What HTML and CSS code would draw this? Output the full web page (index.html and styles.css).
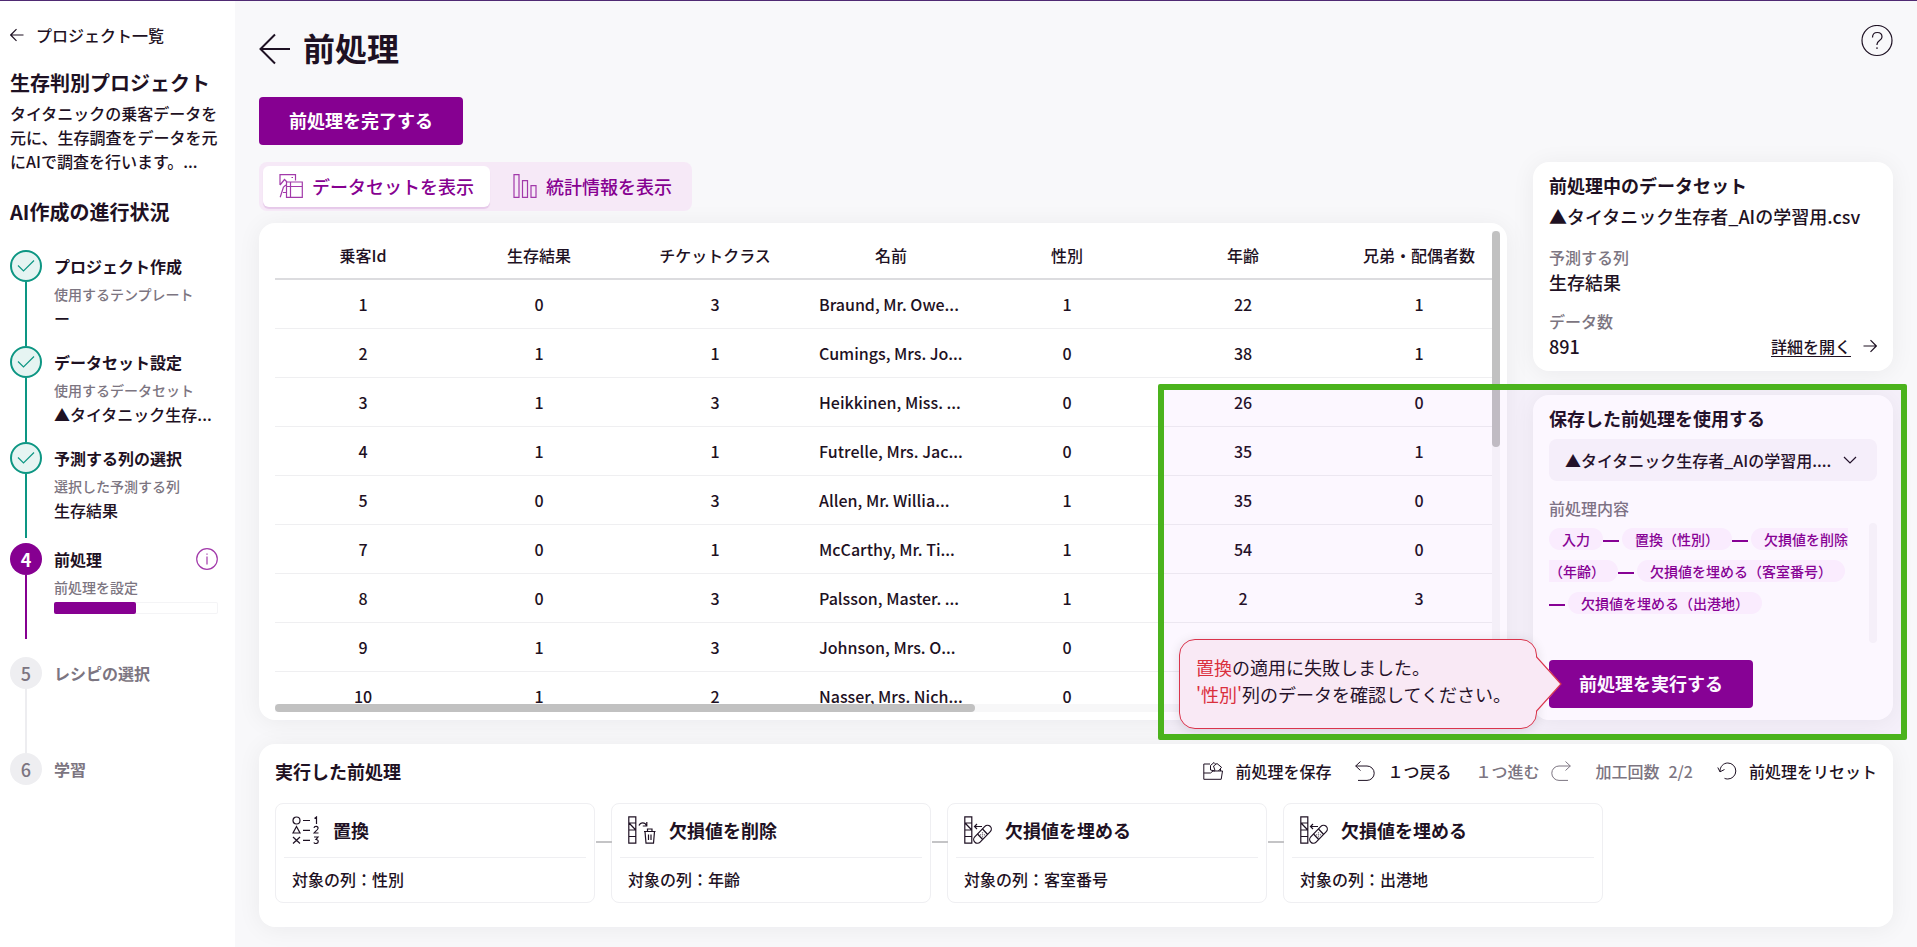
FILE: index.html
```html
<!DOCTYPE html>
<html lang="ja">
<head>
    <meta charset="UTF-8">
    <meta name="viewport" content="width=device-width, initial-scale=1">
    <title>前処理</title>
    <link rel="stylesheet" href="styles.css">
</head>
<body>
    <div class="app">
        <aside class="sidebar">
            <a class="back" href="#">
                <svg width="14" height="14" viewBox="0 0 14 14"><path d="M13.500 7H.8M6.500 1.200L.7 7l5.800 5.800"/></svg>
                プロジェクト一覧
            </a>
            <h2 class="side-title">生存判別プロジェクト</h2>
            <p class="side-desc">タイタニックの乗客データを元に、生存調査をデータを元にAIで調査を行います。...</p>
            <h2 class="side-title progress-title">AI作成の進行状況</h2>
            <ol class="steps">
                <li class="step done">
                    <div class="rail"><span class="circle"><svg width="18" height="14" viewBox="0 0 18 14"><path d="M1 6.500l5.500 5.500L17 1.500"/></svg></span></div>
                    <div class="step-body">
                        <h3>プロジェクト作成</h3>
                        <p class="step-sub">使用するテンプレート</p>
                        <p class="step-value">ー</p>
                    </div>
                </li>
                <li class="step done">
                    <div class="rail"><span class="circle"><svg width="18" height="14" viewBox="0 0 18 14"><path d="M1 6.500l5.500 5.500L17 1.500"/></svg></span></div>
                    <div class="step-body">
                        <h3>データセット設定</h3>
                        <p class="step-sub">使用するデータセット</p>
                        <p class="step-value">▲タイタニック生存...</p>
                    </div>
                </li>
                <li class="step done last-done">
                    <div class="rail"><span class="circle"><svg width="18" height="14" viewBox="0 0 18 14"><path d="M1 6.500l5.500 5.500L17 1.500"/></svg></span></div>
                    <div class="step-body">
                        <h3>予測する列の選択</h3>
                        <p class="step-sub">選択した予測する列</p>
                        <p class="step-value">生存結果</p>
                    </div>
                </li>
                <li class="step current">
                    <div class="rail"><span class="circle">4</span></div>
                    <div class="step-body">
                        <div class="step-head">
                            <h3>前処理</h3>
                            <svg class="info" width="22" height="22" viewBox="0 0 22 22"><circle cx="11" cy="11" r="10.300"/><path d="M11 8.500v8M11 5.500v1.300"/></svg>
                        </div>
                        <p class="step-sub">前処理を設定</p>
                        <div class="bar"><div class="bar-fill" style="width: 50%"></div></div>
                    </div>
                </li>
                <li class="step">
                    <div class="rail"><span class="circle">5</span></div>
                    <div class="step-body"><h3>レシピの選択</h3></div>
                </li>
                <li class="step">
                    <div class="rail"><span class="circle">6</span></div>
                    <div class="step-body"><h3>学習</h3></div>
                </li>
            </ol>
        </aside>

        <main class="main">
            <header class="page-head">
                <a class="head-back" href="#" aria-label="戻る">
                    <svg width="32" height="32" viewBox="0 0 32 32"><path d="M31 16H2M16 1.500L1.500 16 16 30.500"/></svg>
                </a>
                <h1>前処理</h1>
                <button class="help" type="button" aria-label="ヘルプ">
                    <svg width="32" height="32" viewBox="0 0 32 32"><circle cx="16" cy="15.500" r="15"/><path d="M11.500 12.500c0-3 2-5 4.800-5s4.700 1.900 4.700 4.400c0 3.600-5 3.600-5 7.300v.8M16 22.300v1.600"/></svg>
                </button>
            </header>
            <button class="btn" type="button">前処理を完了する</button>

            <div class="work">
                <div class="work-left">
                    <div class="tabs">
                        <button class="tab active" type="button">
                            <svg width="24" height="24" viewBox="0 0 24 24"><path d="M1 11V.7h15.500v5.800M1 11l4.500-5.500L8 8M4.500 13L1.200 23.300M4.500 13l2.500-2M4 18.500h3M12.500 3.500h1.500"/><path d="M7.500 8h15.800v15.300H7.500zM7.500 12.500h15.800M11.500 8v15.300"/></svg>
                            データセットを表示
                        </button>
                        <button class="tab" type="button">
                            <svg width="24" height="24" viewBox="0 0 24 24"><path d="M1 .7h5v22.600H1zM9.500 6.700h5v16.600h-5zM18 11.700h5v11.600h-5z"/></svg>
                            統計情報を表示
                        </button>
                    </div>
                    <section class="card table-card">
                        <div class="table-view">
                            <table class="data">
                                <thead>
                                    <tr><th>乗客Id</th><th>生存結果</th><th>チケットクラス</th><th>名前</th><th>性別</th><th>年齢</th><th>兄弟・配偶者数</th></tr>
                                </thead>
                                <tbody>
                                    <tr><td>1</td><td>0</td><td>3</td><td class="name">Braund, Mr. Owe...</td><td>1</td><td>22</td><td>1</td></tr>
                                    <tr><td>2</td><td>1</td><td>1</td><td class="name">Cumings, Mrs. Jo...</td><td>0</td><td>38</td><td>1</td></tr>
                                    <tr><td>3</td><td>1</td><td>3</td><td class="name">Heikkinen, Miss. ...</td><td>0</td><td>26</td><td>0</td></tr>
                                    <tr><td>4</td><td>1</td><td>1</td><td class="name">Futrelle, Mrs. Jac...</td><td>0</td><td>35</td><td>1</td></tr>
                                    <tr><td>5</td><td>0</td><td>3</td><td class="name">Allen, Mr. Willia...</td><td>1</td><td>35</td><td>0</td></tr>
                                    <tr><td>7</td><td>0</td><td>1</td><td class="name">McCarthy, Mr. Ti...</td><td>1</td><td>54</td><td>0</td></tr>
                                    <tr><td>8</td><td>0</td><td>3</td><td class="name">Palsson, Master. ...</td><td>1</td><td>2</td><td>3</td></tr>
                                    <tr><td>9</td><td>1</td><td>3</td><td class="name">Johnson, Mrs. O...</td><td>0</td><td></td><td></td></tr>
                                    <tr><td>10</td><td>1</td><td>2</td><td class="name">Nasser, Mrs. Nich...</td><td>0</td><td></td><td></td></tr>
                                </tbody>
                            </table>
                        </div>
                        <div class="scroll-y"><div class="thumb"></div></div>
                        <div class="scroll-x"><div class="thumb"></div></div>
                    </section>
                </div>

                <div class="work-right">
                    <section class="card info-card">
                        <h2>前処理中のデータセット</h2>
                        <p class="file">▲タイタニック生存者_AIの学習用.csv</p>
                        <p class="label">予測する列</p>
                        <p class="value">生存結果</p>
                        <p class="label">データ数</p>
                        <div class="count-row">
                            <p class="value">891</p>
                            <a class="detail" href="#"><span>詳細を開く</span>
                                <svg width="14" height="14" viewBox="0 0 14 14"><path d="M.5 7h12.700M7.500 1.200L13.300 7l-5.800 5.800"/></svg>
                            </a>
                        </div>
                    </section>

                    <section class="card saved-card">
                        <h2><label for="saved">保存した前処理を使用する</label></h2>
                        <div class="select">
                            <select id="saved">
                                <option>▲タイタニック生存者_AIの学習用....</option>
                            </select>
                            <svg width="14" height="8" viewBox="0 0 14 8"><path d="M1 1l6 6 6-6"/></svg>
                        </div>
                        <p class="label flow-label">前処理内容</p>
                        <div class="flow">
                            <div class="flow-list"><span class="chip">入力</span><i class="dash"></i><span class="chip">置換（性別）</span><i class="dash"></i><span class="chip">欠損値を削除（年齢）</span><i class="dash"></i><span class="chip">欠損値を埋める（客室番号）</span><i class="dash"></i><span class="chip">欠損値を埋める（出港地）</span></div>
                            <div class="flow-track"></div>
                        </div>
                        <div class="run">
                            <button class="btn" type="button">前処理を実行する</button>
                            <div class="error" role="alert">
                                <em>置換</em>の適用に失敗しました。<br>
                                <em>'性別'</em>列のデータを確認してください。
                                <svg class="error-tail" width="26" height="56" viewBox="0 0 26 56"><path class="tail-fill" d="M0 1h2L25 28 2 55H0z"/><path class="tail-line" d="M.5 0v1L25 28 .5 55v1"/></svg>
                            </div>
                        </div>
                    </section>
                </div>
                <div class="highlight"></div>
            </div>

            <section class="card history">
                <div class="history-head">
                    <h2>実行した前処理</h2>
                    <div class="tools">
                        <button type="button">
                            <svg width="20" height="20" viewBox="0 0 20 20"><path d="M7 3H.8v15.300h17.400l1.300-8.300H10L7.500 12H.8M7.500 9L12 10M7.500 9V4.500L11 1.500 12.500 3M12 9.500L10.500 5 14 2.500l4.500 3.800-3 3.700M17.500 8v2"/></svg>
                            前処理を保存
                        </button>
                        <button type="button">
                            <svg width="20" height="20" viewBox="0 0 20 20"><path d="M5.500.5L.7 5l4.800 4.500M.7 5H12a7.200 7.200 0 010 14.400H3"/></svg>
                            １つ戻る
                        </button>
                        <button type="button" disabled>
                            １つ進む
                            <svg width="20" height="20" viewBox="0 0 20 20"><path d="M14.500.5L19.300 5l-4.800 4.500M19.300 5H8a7.200 7.200 0 000 14.400h9"/></svg>
                        </button>
                        <p class="times"><span>加工回数</span><span>2/2</span></p>
                        <button type="button">
                            <svg width="20" height="20" viewBox="0 0 20 20"><path d="M.8 6.500l2.200 4.300 4.500-2.300M3 10.800C2.800 5.500 6.500 2 10.800 2a8 8 0 010 16c-1.500 0-2.300-.2-3.300-.7"/></svg>
                            前処理をリセット
                        </button>
                    </div>
                </div>
                <div class="jobs">
                    <article class="job">
                        <div class="job-head">
                            <svg width="28" height="28" viewBox="0 0 28 28"><circle cx="4.500" cy="4.500" r="3.500"/><path d="M4.500 10.500L8 17H1zM1 21l7 6.500M8 21l-7 6.500M11 4.500h7M11 14.300h7M11 24.300h7M22.500 2.500l2-1.500v7M22 12c.5-2.500 4.500-2 4 .5-.3 1.500-3 3-4 4.500h4.500M22 21h4l-2 2.500c3 0 3 4-.2 4-1 0-1.600-.4-2-1"/></svg>
                            <h3>置換</h3>
                        </div>
                        <p>対象の列：性別</p>
                    </article>
                    <article class="job">
                        <div class="job-head">
                            <svg width="28" height="28" viewBox="0 0 28 28"><path d="M.8.8h7v26.400h-7zM.8 7h7M.8 14h7M.8 20.500h7M1 7l6.800 7M11 9.500c1.500-3.500 6-3.500 7.500 0M18.800 6v4h-4M16 15.500h11.500M19.500 15.500V13H24v2.500M17 15.500l1 11.700h7.500l1-11.700M20.500 18.500v5.500M23 18.500v5.500"/></svg>
                            <h3>欠損値を削除</h3>
                        </div>
                        <p>対象の列：年齢</p>
                    </article>
                    <article class="job">
                        <div class="job-head">
                            <svg width="28" height="28" viewBox="0 0 28 28"><path d="M.8.8h7v26.400h-7zM.8 7h7M.8 14h7M.8 20.500h7M1 7l6.800 7M18 10.500h-7.500M13 8l-2.500 2.500L13 13"/><rect x="7.500" y="14.500" width="22" height="7.500" rx="3.700" transform="rotate(-46 18.500 18.250)"/><path d="M13.500 18l5.200 5.500M18.500 13l5.200 5.500M18.500 16.500v.8M16.500 18.500v.8M18.500 18.500v.8M20.500 18.500v.8M18.500 20.500v.8"/></svg>
                            <h3>欠損値を埋める</h3>
                        </div>
                        <p>対象の列：客室番号</p>
                    </article>
                    <article class="job">
                        <div class="job-head">
                            <svg width="28" height="28" viewBox="0 0 28 28"><path d="M.8.8h7v26.400h-7zM.8 7h7M.8 14h7M.8 20.500h7M1 7l6.800 7M18 10.500h-7.500M13 8l-2.500 2.500L13 13"/><rect x="7.500" y="14.500" width="22" height="7.500" rx="3.700" transform="rotate(-46 18.500 18.250)"/><path d="M13.500 18l5.200 5.500M18.500 13l5.200 5.500M18.500 16.500v.8M16.500 18.500v.8M18.500 18.500v.8M20.500 18.500v.8M18.500 20.500v.8"/></svg>
                            <h3>欠損値を埋める</h3>
                        </div>
                        <p>対象の列：出港地</p>
                    </article>
                </div>
            </section>
        </main>
    </div>
</body>
</html>
```
FILE: styles.css
```css
* {
    box-sizing: border-box;
}
body {
    margin: 0;
    background-color: #f8f8fa;
    color: #1e1123;
    font-family: "Noto Sans CJK JP", sans-serif;
    font-size: 16px;
    font-weight: 500;
    line-height: 24px;
}
h1, h2, h3, p, ol {
    margin: 0;
    padding: 0;
}
h2, h3 {
    font-weight: 700;
}
h2 {
    font-size: 18px;
    line-height: 26px;
}
h3 {
    font-size: 16px;
    line-height: 24px;
}
a {
    color: inherit;
    text-decoration: none;
}
button, select {
    font: inherit;
    color: inherit;
    border: none;
    background: none;
    padding: 0;
    cursor: pointer;
}
svg {
    fill: none;
    stroke: currentColor;
    stroke-width: 1.2;
    flex-shrink: 0;
}
.app {
    display: flex;
    min-height: 100vh;
    border-top: 1px solid #4f2a73;
}

/*  SIDEBAR  */
.sidebar {
    width: 235px;
    flex-shrink: 0;
    padding: 22px 17px 22px 10px;
    background-color: white;
}
.back {
    display: flex;
    align-items: center;
    gap: 12px;
}
.side-title {
    margin-top: 21px;
    font-size: 20px;
    line-height: 30px;
}
.side-desc {
    margin-top: 3px;
}
.progress-title {
    margin-top: 24px;
}
.steps {
    margin-top: 23px;
    list-style: none;
}
.step {
    display: flex;
    gap: 12px;
    color: #7c7581;
}
.rail {
    display: flex;
    flex-direction: column;
    align-items: center;
}
.rail::after {
    content: "";
    width: 2px;
    height: 64px;
    background-color: #ededf0;
}
.step:last-child .rail::after {
    display: none;
}
.circle {
    display: flex;
    align-items: center;
    justify-content: center;
    width: 32px;
    height: 32px;
    border-radius: 50%;
    background-color: #eeeef1;
    font-size: 18px;
}
.step-body {
    flex: 1;
    min-width: 0;
    padding-top: 4px;
}
.step-head {
    display: flex;
    align-items: center;
    justify-content: space-between;
}
.step-sub {
    margin-top: 6px;
    font-size: 14px;
    line-height: 20px;
    color: #7c7581;
}
.step-value {
    margin-top: 2px;
}
.done, .current {
    color: #1e1123;
}
.done .circle {
    border: 2px solid #0d9683;
    background-color: #e6f4f2;
    color: #0d9683;
}
.done .rail::after {
    background-color: #0d9683;
}
.last-done {
    margin-bottom: 5px;
}
.current {
    margin-bottom: 18px;
}
.current .circle {
    background-color: #860091;
    color: white;
    font-weight: 700;
}
.current .rail::after {
    background-color: #860091;
}
.info {
    color: #a23aaa;
}
.bar {
    height: 12px;
    margin-top: 5px;
    border-radius: 2px;
    box-shadow: inset 0 0 0 1px #f4f4f6;
}
.bar-fill {
    height: 100%;
    border-radius: 2px;
    background-color: #860091;
}

/*  MAIN  */
.main {
    flex: 1;
    min-width: 0;
    padding: 24px 24px 20px;
}
.page-head {
    display: flex;
    gap: 12px;
    height: 48px;
    margin-bottom: 24px;
}
.page-head h1 {
    flex: 1;
    font-size: 32px;
    line-height: 44px;
}
.head-back {
    display: flex;
    align-items: center;
}
.head-back svg {
    stroke-width: 2;
}
.help {
    align-self: flex-start;
    height: 32px;
}
.btn {
    display: block;
    height: 48px;
    padding: 0 30px 2px;
    border-radius: 4px;
    background-color: #860091;
    color: white;
    font-size: 18px;
    font-weight: 700;
}
.card {
    border-radius: 16px;
    background-color: white;
    box-shadow: 0 2px 24px rgba(20, 10, 30, 0.06);
}
.work {
    position: relative;
    display: flex;
    gap: 26px;
    margin-top: 17px;
}
.work-left {
    flex: 1;
    min-width: 0;
}
.work-right {
    display: flex;
    flex-direction: column;
    gap: 24px;
    width: 360px;
}

/*  TABS  */
.tabs {
    display: inline-flex;
    gap: 7px;
    padding: 4px;
    border-radius: 8px;
    background-color: #f6e9f7;
    vertical-align: top;
}
.tab {
    display: flex;
    align-items: center;
    gap: 9px;
    height: 41px;
    padding: 0 16px 2px;
    border-radius: 6px;
    color: #860091;
    font-size: 18px;
}
.tab svg {
    stroke: #a23aaa;
}
.tab.active {
    background-color: white;
    box-shadow: 0 2px 1px #e6c9e9;
}

/*  TABLE  */
.table-card {
    display: grid;
    grid-template-columns: minmax(0, 1fr) 8px;
    margin-top: 12px;
    padding: 8px 7px 8px 16px;
}
.table-view {
    height: 473px;
    overflow: hidden;
}
.data {
    table-layout: fixed;
    width: 1232px;
    border-spacing: 0;
}
.data th, .data td {
    height: 49px;
    padding: 0 16px;
    border-bottom: 1px solid #efeff1;
    text-align: center;
    font-weight: 500;
    white-space: nowrap;
}
.data th {
    padding: 0;
    border-bottom: 2px solid #dcdcdf;
}
.data .name {
    text-align: left;
}
.scroll-y {
    grid-row: 1 / 3;
    grid-column: 2;
    background-color: #f7f7f8;
}
.scroll-x {
    background-color: #f7f7f8;
}
.thumb {
    border-radius: 4px;
    background-color: #c1c1c1;
}
.scroll-y .thumb {
    height: 45%;
}
.scroll-x .thumb {
    width: 57.5%;
    height: 8px;
}

/*  RIGHT CARDS  */
.info-card, .saved-card {
    padding: 11px 16px 12px;
}
.info-card h2, .saved-card h2 {
    line-height: 24px;
}
.file {
    margin-top: 6px;
    font-size: 18px;
    line-height: 26px;
    white-space: nowrap;
}
.label {
    margin-top: 14px;
    color: #7c7581;
}
.file + .label {
    margin-top: 16px;
}
.value {
    font-size: 18px;
    line-height: 26px;
}
.count-row {
    display: flex;
    align-items: center;
    justify-content: space-between;
}
.detail {
    display: flex;
    align-items: center;
    gap: 12px;
}
.detail span {
    border-bottom: 1px solid #1e1123;
    line-height: 20px;
}
.select {
    position: relative;
    margin-top: 9px;
}
.select select {
    display: block;
    width: 100%;
    height: 42px;
    padding: 0 32px 0 16px;
    border-radius: 8px;
    background-color: #f8f6fa;
    appearance: none;
}
.select svg {
    position: absolute;
    top: 17px;
    right: 20px;
    pointer-events: none;
}
.flow-label {
    margin-top: 15px;
}
.flow {
    display: flex;
    justify-content: space-between;
    height: 120px;
    margin-top: 3px;
}
.flow-list {
    width: 306px;
    color: #860091;
    font-size: 14px;
    line-height: 32px;
}
.flow-track {
    width: 8px;
    border-radius: 4px;
    background-color: #f8f7f9;
}
.chip {
    padding: 1px 13px;
    border-radius: 12px;
    background-color: #fdf4fe;
}
.dash {
    display: inline-block;
    width: 16px;
    height: 2px;
    margin-right: 3px;
    background-color: #860091;
    vertical-align: middle;
}
.run {
    position: relative;
    width: fit-content;
    margin-top: 17px;
}
.error {
    position: absolute;
    z-index: 1;
    right: calc(100% + 12px);
    bottom: -21px;
    width: 358px;
    padding: 14px 16px 20px;
    border: 1px solid #dc3545;
    border-radius: 16px;
    background-color: #fcf1f5;
    box-shadow: 0 2px 12px rgba(20, 10, 30, 0.12);
    font-size: 18px;
    font-weight: 400;
    line-height: 27px;
    white-space: nowrap;
}
.error em {
    color: #dc2f35;
    font-style: normal;
}
.error-tail {
    position: absolute;
    top: 16px;
    left: 100%;
}
.tail-fill {
    fill: #fcf1f5;
    stroke: none;
}
.tail-line {
    stroke: #dc3545;
}

/*  marked area around the failed run  */
.highlight {
    position: absolute;
    z-index: 2;
    right: -14px;
    bottom: -20px;
    width: 749px;
    height: 356px;
    border: 6px solid #4bb31d;
    border-radius: 2px;
    background-color: rgba(190, 60, 255, 0.04);
    pointer-events: none;
}

/*  HISTORY  */
.history {
    margin-top: 24px;
    padding: 14px 16px 24px;
}
.history-head {
    display: flex;
    align-items: center;
    justify-content: space-between;
}
.tools {
    display: flex;
    align-items: center;
    gap: 24px;
}
.tools button {
    display: flex;
    align-items: center;
    gap: 12px;
}
.tools button:disabled, .times {
    color: #7c7581;
}
.times {
    display: flex;
    gap: 9px;
}
.tools svg {
    stroke-width: 1;
}
.jobs {
    display: flex;
    gap: 16px;
    margin-top: 19px;
}
.job {
    position: relative;
    width: 320px;
    padding: 0 8px;
    border: 1px solid #efeff2;
    border-radius: 8px;
}
.job + .job::before {
    content: "";
    position: absolute;
    top: 37px;
    right: 100%;
    width: 16px;
    height: 2px;
    background-color: #c4c4c6;
}
.job-head {
    display: flex;
    align-items: center;
    gap: 13px;
    height: 54px;
    padding: 0 8px 2px;
    border-bottom: 1px solid #efeff2;
}
.job h3 {
    font-size: 18px;
}
.job p {
    padding: 9px 8px 11px;
}
```
